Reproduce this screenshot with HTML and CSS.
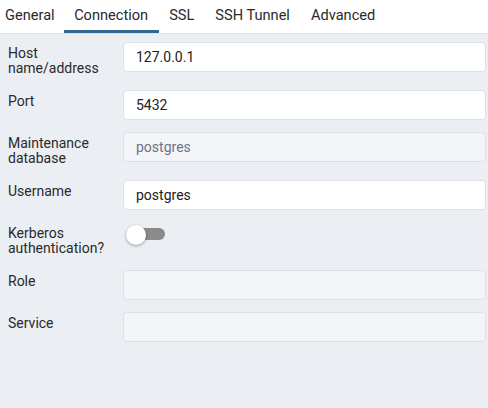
FILE: index.html
```html
<!DOCTYPE html>
<html lang="en">
<head>
<meta charset="utf-8">
<title>Connection</title>
<link rel="stylesheet" href="styles.css">
</head>
<body>
<div class="page">
  <div class="tabs">
    <div class="tab first">General</div>
    <div class="tab active">Connection</div>
    <div class="tab">SSL</div>
    <div class="tab">SSH Tunnel</div>
    <div class="tab">Advanced</div>
  </div>
  <div class="form">
    <div class="row">
      <div class="label">Host<br>name/address</div>
      <div class="field"><div class="input">127.0.0.1</div></div>
    </div>
    <div class="row">
      <div class="label">Port</div>
      <div class="field"><div class="input">5432</div></div>
    </div>
    <div class="row">
      <div class="label">Maintenance<br>database</div>
      <div class="field"><div class="input disabled">postgres</div></div>
    </div>
    <div class="row">
      <div class="label">Username</div>
      <div class="field"><div class="input">postgres</div></div>
    </div>
    <div class="row">
      <div class="label">Kerberos<br>authentication?</div>
      <div class="field">
        <div class="switch"><span class="track"></span><span class="knob"></span></div>
      </div>
    </div>
    <div class="row">
      <div class="label">Role</div>
      <div class="field"><div class="input disabled"></div></div>
    </div>
    <div class="row">
      <div class="label">Service</div>
      <div class="field"><div class="input disabled"></div></div>
    </div>
  </div>
</div>
</body>
</html>
```
FILE: styles.css
```css
* { box-sizing: border-box; }
html, body {
  margin: 0;
  padding: 0;
  height: 100%;
}
body {
  font-family: Roboto, "Liberation Sans", sans-serif;
  font-size: 14px;
  color: #222222;
  background: #ebeef3;
}
.page {
  min-height: 100%;
  display: flex;
  flex-direction: column;
}
.tabs {
  display: flex;
  height: 34px;
  background: #ffffff;
  border-bottom: 1px solid #dde0e6;
}
.tab {
  position: relative;
  padding: 0 10.5px;
  font-size: 14.6px;
  line-height: 31px;
  color: #2a2a2a;
  white-space: nowrap;
}
.tab.first {
  padding-left: 5px;
  padding-right: 9px;
}
.tab.active::after {
  content: "";
  position: absolute;
  left: 0;
  right: 0;
  bottom: 0;
  height: 3px;
  background: #326690;
}
.form {
  padding: 8px 2px 0 8px;
}
.row {
  display: flex;
  align-items: flex-start;
  margin-bottom: 12px;
}
.label {
  width: 115px;
  flex: none;
  padding: 4px 0 2px;
  line-height: 15px;
  font-size: 14px;
  color: #2a2a2a;
}
.field {
  flex: 1;
  min-width: 0;
}
.input {
  height: 30px;
  border: 1px solid #dde0e6;
  border-radius: 4px;
  background: #ffffff;
  padding: 0 12px;
  line-height: 28px;
  font-size: 14px;
  color: #222222;
}
.input.disabled {
  background: #f3f5f9;
  color: #6b7486;
}
.switch {
  position: relative;
  width: 45px;
  height: 26px;
}
.track {
  position: absolute;
  left: 7px;
  top: 6px;
  width: 35px;
  height: 12px;
  border-radius: 6px;
  background: #8a8a8a;
}
.knob {
  position: absolute;
  left: 3px;
  top: 3px;
  width: 20px;
  height: 20px;
  border-radius: 50%;
  background: #ffffff;
  box-shadow: 0 1px 3px rgba(0, 0, 0, 0.35);
}
```
